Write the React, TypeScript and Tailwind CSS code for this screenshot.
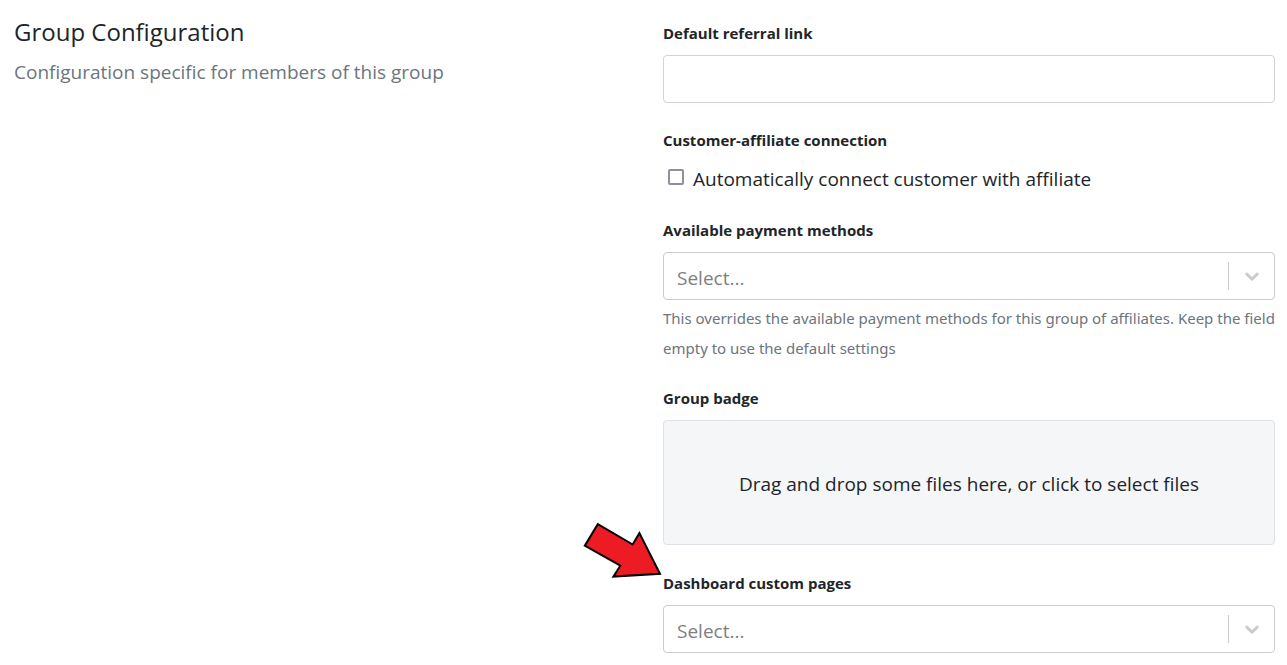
import React, { useId, useRef, useState } from "react";

const labelClass = "block text-[15px] leading-6 font-bold text-[#212529]";

function SelectField({ label, help, arrow }: { label: string; help?: string; arrow?: boolean }) {
  const id = useId();
  return (
    <div>
      <div className="relative">
        <label htmlFor={id} className={labelClass}>{label}</label>
        {arrow && (
          <svg className="absolute -left-20 -top-[49px] h-[57px] w-[80px]" viewBox="0 0 80 57" aria-hidden="true">
            <path d="M14.8 2.2 L49.7 22.5 L56.4 11 L77 51.8 L30.4 54.6 L37.3 43.7 L1.8 23.7 Z" fill="#ed1c24" stroke="#000" strokeWidth="2" />
          </svg>
        )}
      </div>
      <div className="relative mt-[10px]">
        <select
          id={id}
          defaultValue=""
          className="block h-12 w-full appearance-none rounded border border-[#cccccc] bg-white px-[13px] pt-1 text-[19px] text-[#808080]"
        >
          <option value="">Select...</option>
        </select>
        <div className="pointer-events-none absolute inset-y-[10px] right-0 flex items-center">
          <span className="h-full w-px bg-[#cccccc]" />
          <svg className="mx-3 h-[22px] w-[22px]" viewBox="0 0 20 20" fill="#cccccc" stroke="#cccccc" strokeWidth="0.7" aria-hidden="true">
            <path d="M4.516 7.548c0.436-0.446 1.043-0.481 1.576 0l3.908 3.747 3.908-3.747c0.533-0.481 1.141-0.446 1.574 0 0.436 0.445 0.408 1.197 0 1.615-0.406 0.418-4.695 4.502-4.695 4.502-0.217 0.223-0.502 0.335-0.787 0.335s-0.57-0.112-0.789-0.335c0 0-4.287-4.084-4.695-4.502s-0.436-1.17 0-1.615z" />
          </svg>
        </div>
      </div>
      {help && <p className="mt-[3px] font-['Noto_Sans',sans-serif] text-[15px] leading-[30px] text-[#6c757d]">{help}</p>}
    </div>
  );
}

export default function App() {
  const [checked, setChecked] = useState(false);
  const fileRef = useRef<HTMLInputElement>(null);
  return (
    <main className="grid grid-cols-2 gap-x-[37px] bg-white pt-[14px] pr-3 pb-3 pl-[14px] font-['Open_Sans','Noto_Sans',sans-serif] text-[#212529]">
      <header>
        <h1 className="text-[24px] leading-9">Group Configuration</h1>
        <p className="mt-[7px] text-[19px] leading-[30px] text-[#6c757d]">Configuration specific for members of this group</p>
      </header>
      <form className="flex flex-col pt-[7px]" onSubmit={(e) => e.preventDefault()}>
        <label htmlFor="referral" className={labelClass}>Default referral link</label>
        <input id="referral" type="text" className="mt-[10px] h-12 w-full rounded border border-[#ced4da] px-3 text-[19px]" />
        <fieldset className="mt-[25px]">
          <legend className={labelClass}>Customer-affiliate connection</legend>
          <label className="mt-3 flex items-center gap-[9px] pl-[5px] text-[19px] leading-[30px]">
            <input
              type="checkbox"
              checked={checked}
              onChange={(e) => setChecked(e.target.checked)}
              className="-mt-1 h-4 w-4 appearance-none rounded-xs border-2 border-[#8f8f9d] bg-white checked:bg-[#0060df]"
            />
            Automatically connect customer with affiliate
          </label>
        </fieldset>
        <div className="mt-6">
          <SelectField
            label="Available payment methods"
            help="This overrides the available payment methods for this group of affiliates. Keep the field empty to use the default settings"
          />
        </div>
        <div className="mt-[23px]">
          <label htmlFor="badge" className={labelClass}>Group badge</label>
          <button
            type="button"
            onClick={() => fileRef.current?.click()}
            className="mt-[10px] block h-[125px] w-full rounded border border-[#dee2e6] bg-[#f5f6f8] pt-[3px] text-[19px]"
          >
            Drag and drop some files here, or click to select files
          </button>
          <input id="badge" ref={fileRef} type="file" className="hidden" />
        </div>
        <div className="mt-[26px]">
          <SelectField label="Dashboard custom pages" arrow />
        </div>
      </form>
    </main>
  );
}
